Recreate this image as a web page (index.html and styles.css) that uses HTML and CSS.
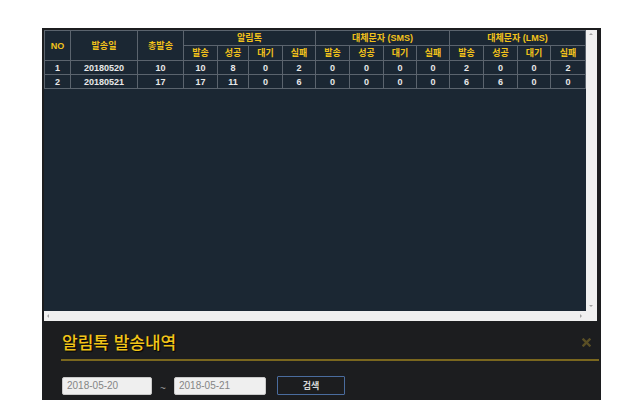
FILE: index.html
```html
<!DOCTYPE html>
<html lang="ko">
<head>
<meta charset="utf-8">
<link rel="stylesheet" href="styles.css">
</head>
<body>
<div class="panel">
  <div class="scrollbox">
    <div class="content">
      <table class="grid">
        <colgroup>
          <col class="c26"><col class="c67"><col class="c46">
          <col class="c34"><col class="c31"><col class="c34"><col class="c33">
          <col class="c34"><col class="c34"><col class="c33"><col class="c33">
          <col class="c34"><col class="c34"><col class="c33"><col class="c35">
        </colgroup>
        <thead>
          <tr class="h1">
            <th rowspan="2">NO</th>
            <th rowspan="2">발송일</th>
            <th rowspan="2">총발송</th>
            <th colspan="4">알림톡</th>
            <th colspan="4">대체문자 (SMS)</th>
            <th colspan="4">대체문자 (LMS)</th>
          </tr>
          <tr class="h2">
            <th>발송</th><th>성공</th><th>대기</th><th>실패</th>
            <th>발송</th><th>성공</th><th>대기</th><th>실패</th>
            <th>발송</th><th>성공</th><th>대기</th><th>실패</th>
          </tr>
        </thead>
        <tbody>
          <tr>
            <td>1</td><td>20180520</td><td>10</td>
            <td>10</td><td>8</td><td>0</td><td>2</td>
            <td>0</td><td>0</td><td>0</td><td>0</td>
            <td>2</td><td>0</td><td>0</td><td>2</td>
          </tr>
          <tr>
            <td>2</td><td>20180521</td><td>17</td>
            <td>17</td><td>11</td><td>0</td><td>6</td>
            <td>0</td><td>0</td><td>0</td><td>0</td>
            <td>6</td><td>6</td><td>0</td><td>0</td>
          </tr>
        </tbody>
      </table>
    </div>
    <div class="vbar">
      <span class="arr up"></span>
      <span class="arr down"></span>
    </div>
    <div class="hbar">
      <span class="arr left"></span>
      <span class="arr right"></span>
    </div>
    <div class="corner"></div>
  </div>

  <div class="head">
    <h2 class="title">알림톡 발송내역</h2>
    <svg class="close" width="9" height="9" viewBox="0 0 9 9">
      <path d="M1.5 1.5 L7.5 7.5 M7.5 1.5 L1.5 7.5" stroke="#5a4f25" stroke-width="2.4" stroke-linecap="square"/>
    </svg>
  </div>

  <div class="search">
    <div class="field">2018-05-20</div>
    <span class="tilde">~</span>
    <div class="field wide">2018-05-21</div>
    <button class="btn">검색</button>
  </div>
</div>
</body>
</html>
```

FILE: styles.css
```css
html, body {
  margin: 0;
  padding: 0;
  background: #ffffff;
}

body {
  font-family: "Liberation Sans", "Noto Sans CJK KR", sans-serif;
}

.panel {
  margin: 28px 0 0 42px;
  width: 555px;
  height: 368px;
  padding: 2px 2px 2px 2px;
  background: #1c1d1f;
  overflow: hidden;
}

.scrollbox {
  display: grid;
  grid-template-columns: 542px 11px;
  grid-template-rows: 281px 10px;
  width: 553px;
  height: 291px;
}

.content {
  background: #1b2733;
  overflow: hidden;
}

.vbar, .hbar, .corner {
  background: #f0f0f0;
  position: relative;
}

.arr {
  position: absolute;
  width: 0;
  height: 0;
  border: 2px solid transparent;
}

.arr.up {
  top: 3px;
  left: 3px;
  border-bottom: 2px solid #a3a3a3;
  border-top-width: 0;
}

.arr.down {
  bottom: 4px;
  left: 3px;
  border-top: 2px solid #a3a3a3;
  border-bottom-width: 0;
}

.arr.left {
  left: 3px;
  top: 3px;
  border-right: 2px solid #a3a3a3;
  border-left-width: 0;
}

.arr.right {
  right: 4px;
  top: 3px;
  border-left: 2px solid #a3a3a3;
  border-right-width: 0;
}

.grid {
  border-collapse: collapse;
  table-layout: fixed;
  width: 541px;
  font-size: 9px;
  font-weight: bold;
}

.c26 { width: 26px; }
.c31 { width: 31px; }
.c33 { width: 33px; }
.c34 { width: 34px; }
.c35 { width: 35px; }
.c46 { width: 46px; }
.c67 { width: 67px; }

.grid th, .grid td {
  border: 1px solid #5b646e;
  padding: 0;
  text-align: center;
  line-height: 12px;
  white-space: nowrap;
  overflow: hidden;
}

.grid th {
  color: #f2c21b;
  height: 14px;
}

.grid td {
  color: #e9e9e9;
  height: 13px;
}

.head {
  display: flex;
  align-items: center;
  justify-content: space-between;
  margin: 0 0 0 17px;
  height: 38px;
  border-bottom: 2px solid #7a671e;
}

.title {
  margin: 0 0 0 1px;
  font-family: "Noto Sans CJK KR", sans-serif;
  font-size: 17px;
  font-weight: 500;
  color: #f2c419;
  text-shadow: 1px 1px 1px #000;
  line-height: 20px;
  padding-top: 4px;
}

.close {
  margin-right: 8px;
  margin-top: 4px;
}

.search {
  display: flex;
  align-items: center;
  margin: 15px 0 0 18px;
}

.field {
  width: 84px;
  height: 16px;
  padding-left: 4px;
  background: #efefef;
  border: 1px solid #c9c9c9;
  border-radius: 2px;
  font-size: 10px;
  line-height: 16px;
  color: #858585;
}

.field.wide {
  width: 86px;
}

.tilde {
  width: 22px;
  text-align: center;
  color: #9a9a9a;
  font-size: 10px;
  padding-top: 5px;
}

.btn {
  margin-left: 11px;
  width: 68px;
  height: 19px;
  padding: 0;
  background: #1c1d1f;
  border: 1px solid #4a6c9e;
  border-radius: 1px;
  color: #d6d6d6;
  font-family: "Noto Sans CJK KR", sans-serif;
  font-size: 9px;
  font-weight: bold;
}
```
